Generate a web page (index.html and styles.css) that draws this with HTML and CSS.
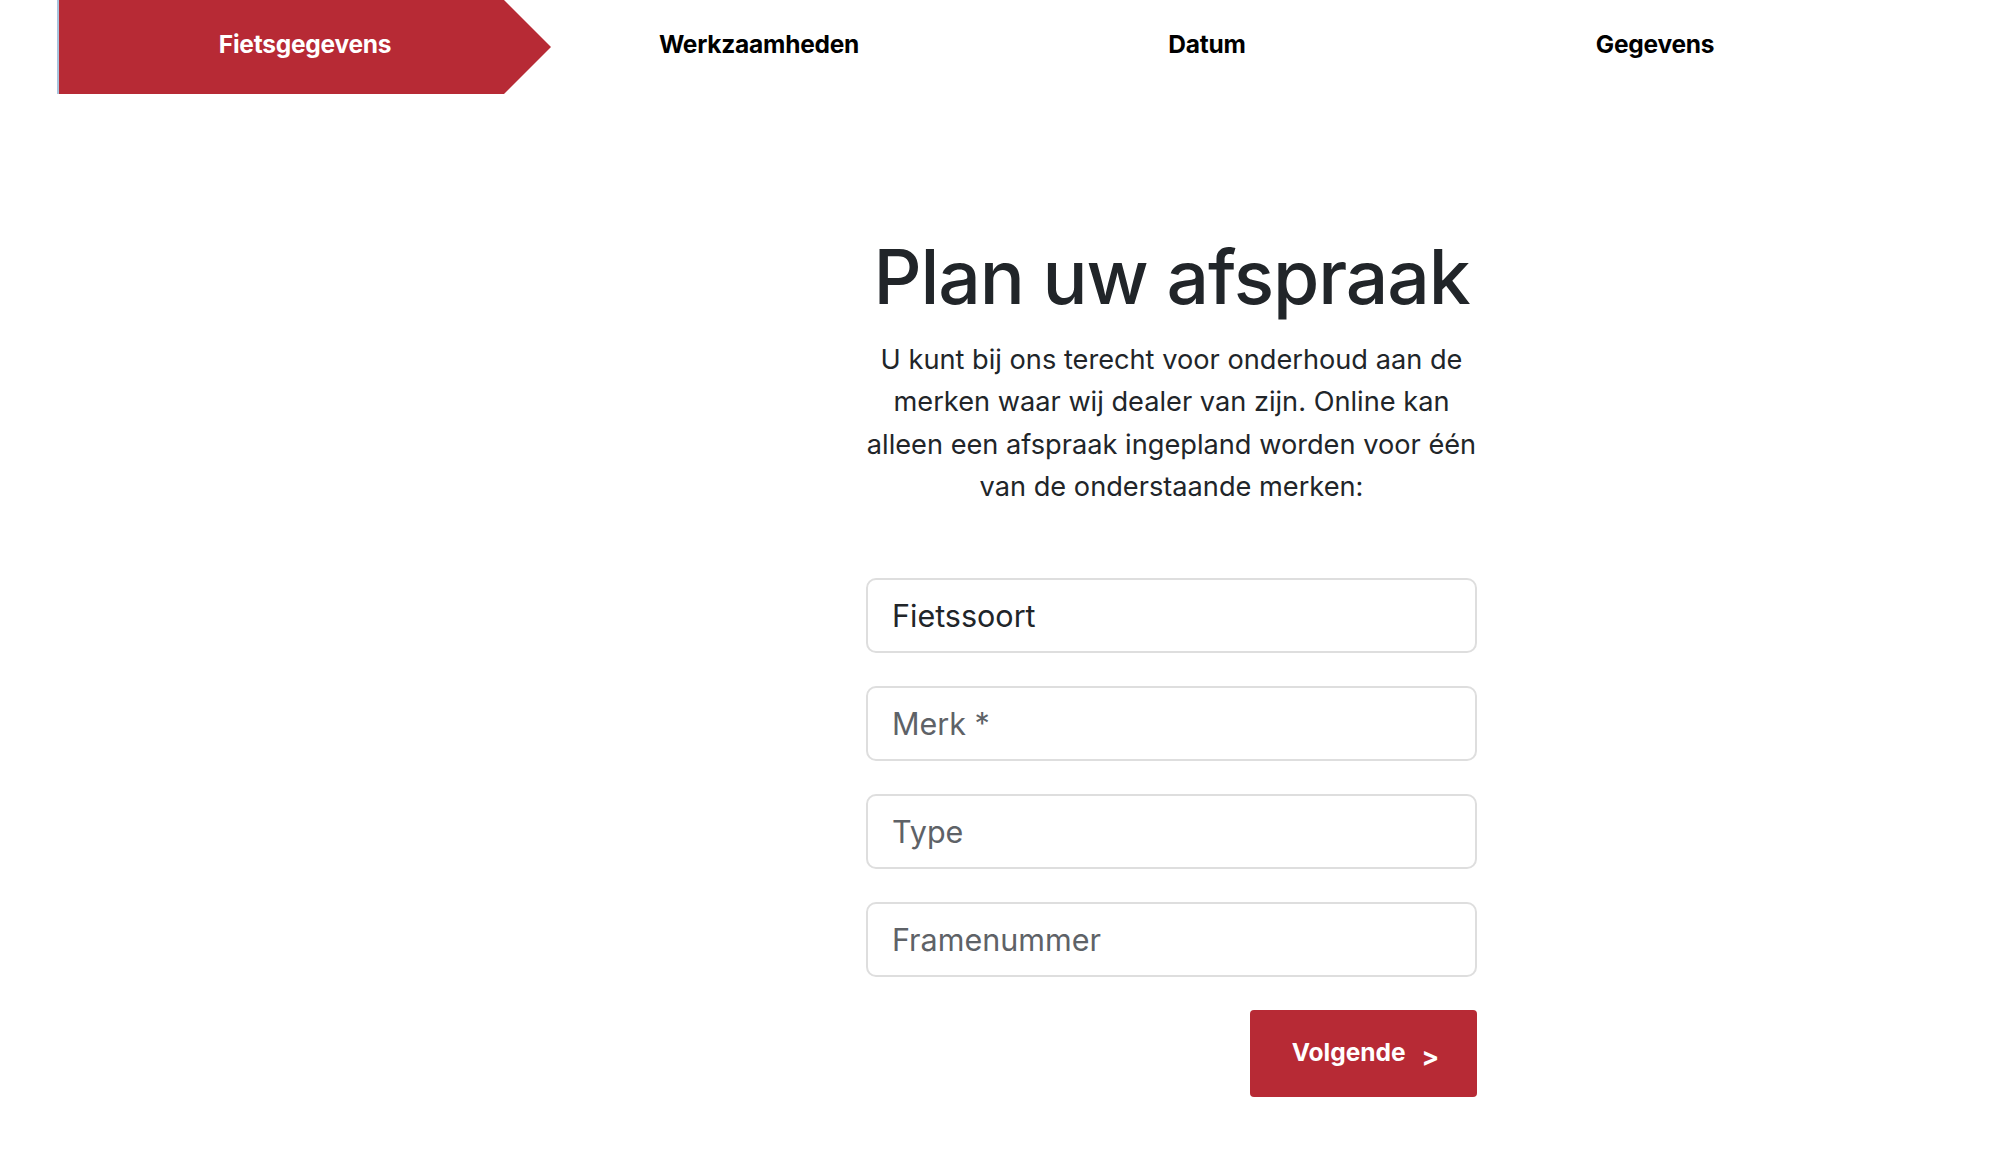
FILE: index.html
```html
<!DOCTYPE html>
<html lang="nl">
<head>
<meta charset="utf-8">
<title>Plan uw afspraak</title>
<link rel="stylesheet" href="styles.css">
</head>
<body>
<nav class="steps">
  <div class="step step-active">Fietsgegevens</div>
  <div class="step">Werkzaamheden</div>
  <div class="step">Datum</div>
  <div class="step">Gegevens</div>
</nav>
<main class="content">
  <h1 class="title">Plan uw afspraak</h1>
  <p class="intro">U kunt bij ons terecht voor onderhoud aan de merken waar wij dealer van zijn. Online kan alleen een afspraak ingepland worden voor één van de onderstaande merken:</p>
  <form class="form">
    <div class="field field-value">Fietssoort</div>
    <div class="field">Merk *</div>
    <div class="field">Type</div>
    <div class="field">Framenummer</div>
    <div class="actions">
      <button type="button" class="btn">Volgende <span class="chev">&gt;</span></button>
    </div>
  </form>
</main>
</body>
</html>
```

FILE: styles.css
```css
* { box-sizing: border-box; }

html, body {
  margin: 0;
  padding: 0;
  background: #ffffff;
}

body {
  font-family: Inter, "Noto Sans", "Liberation Sans", sans-serif;
  color: #212529;
}

.steps {
  display: flex;
  align-items: stretch;
  height: 94px;
  padding-left: 57px;
}

.step {
  width: 448px;
  display: flex;
  align-items: center;
  justify-content: center;
  padding-bottom: 6px;
  font-size: 24.5px;
  font-weight: 700;
  color: #000000;
  letter-spacing: -0.01em;
}

.step-active {
  width: 494px;
  margin-right: -16px;
  color: #ffffff;
  background: #b72a35;
  border-left: 2px solid #a9c3dc;
  clip-path: polygon(0 0, 447px 0, 494px 50%, 447px 100%, 0 100%);
}

.content {
  width: 611px;
  margin-left: 866px;
  text-align: center;
}

.title {
  margin: 136px 0 0;
  font-size: 75px;
  line-height: 93px;
  font-weight: 500;
  letter-spacing: -0.015em;
  white-space: nowrap;
  color: #212529;
}

.intro {
  margin: 16px 0 0;
  font-size: 27.2px;
  line-height: 42.3px;
  font-weight: 400;
  color: #212529;
}

.form {
  margin-top: 70px;
  display: flex;
  flex-direction: column;
  gap: 33px;
}

.field {
  height: 75px;
  border: 2px solid #dedede;
  border-radius: 10px;
  display: flex;
  align-items: center;
  padding-left: 24px;
  font-size: 30.5px;
  color: #5e6267;
  text-align: left;
}

.field-value {
  color: #212529;
}

.actions {
  display: flex;
  justify-content: flex-end;
}

.btn {
  width: 227px;
  height: 87px;
  border: none;
  border-radius: 4px;
  background: #b72a35;
  color: #ffffff;
  font-family: Inter, "Noto Sans", "Liberation Sans", sans-serif;
  font-size: 24.5px;
  font-weight: 700;
  display: flex;
  align-items: center;
  justify-content: center;
  padding: 0 0 4px 4px;
}

.chev {
  margin-left: 16px;
  position: relative;
  top: 5px;
  font-size: 26px;
}
```
